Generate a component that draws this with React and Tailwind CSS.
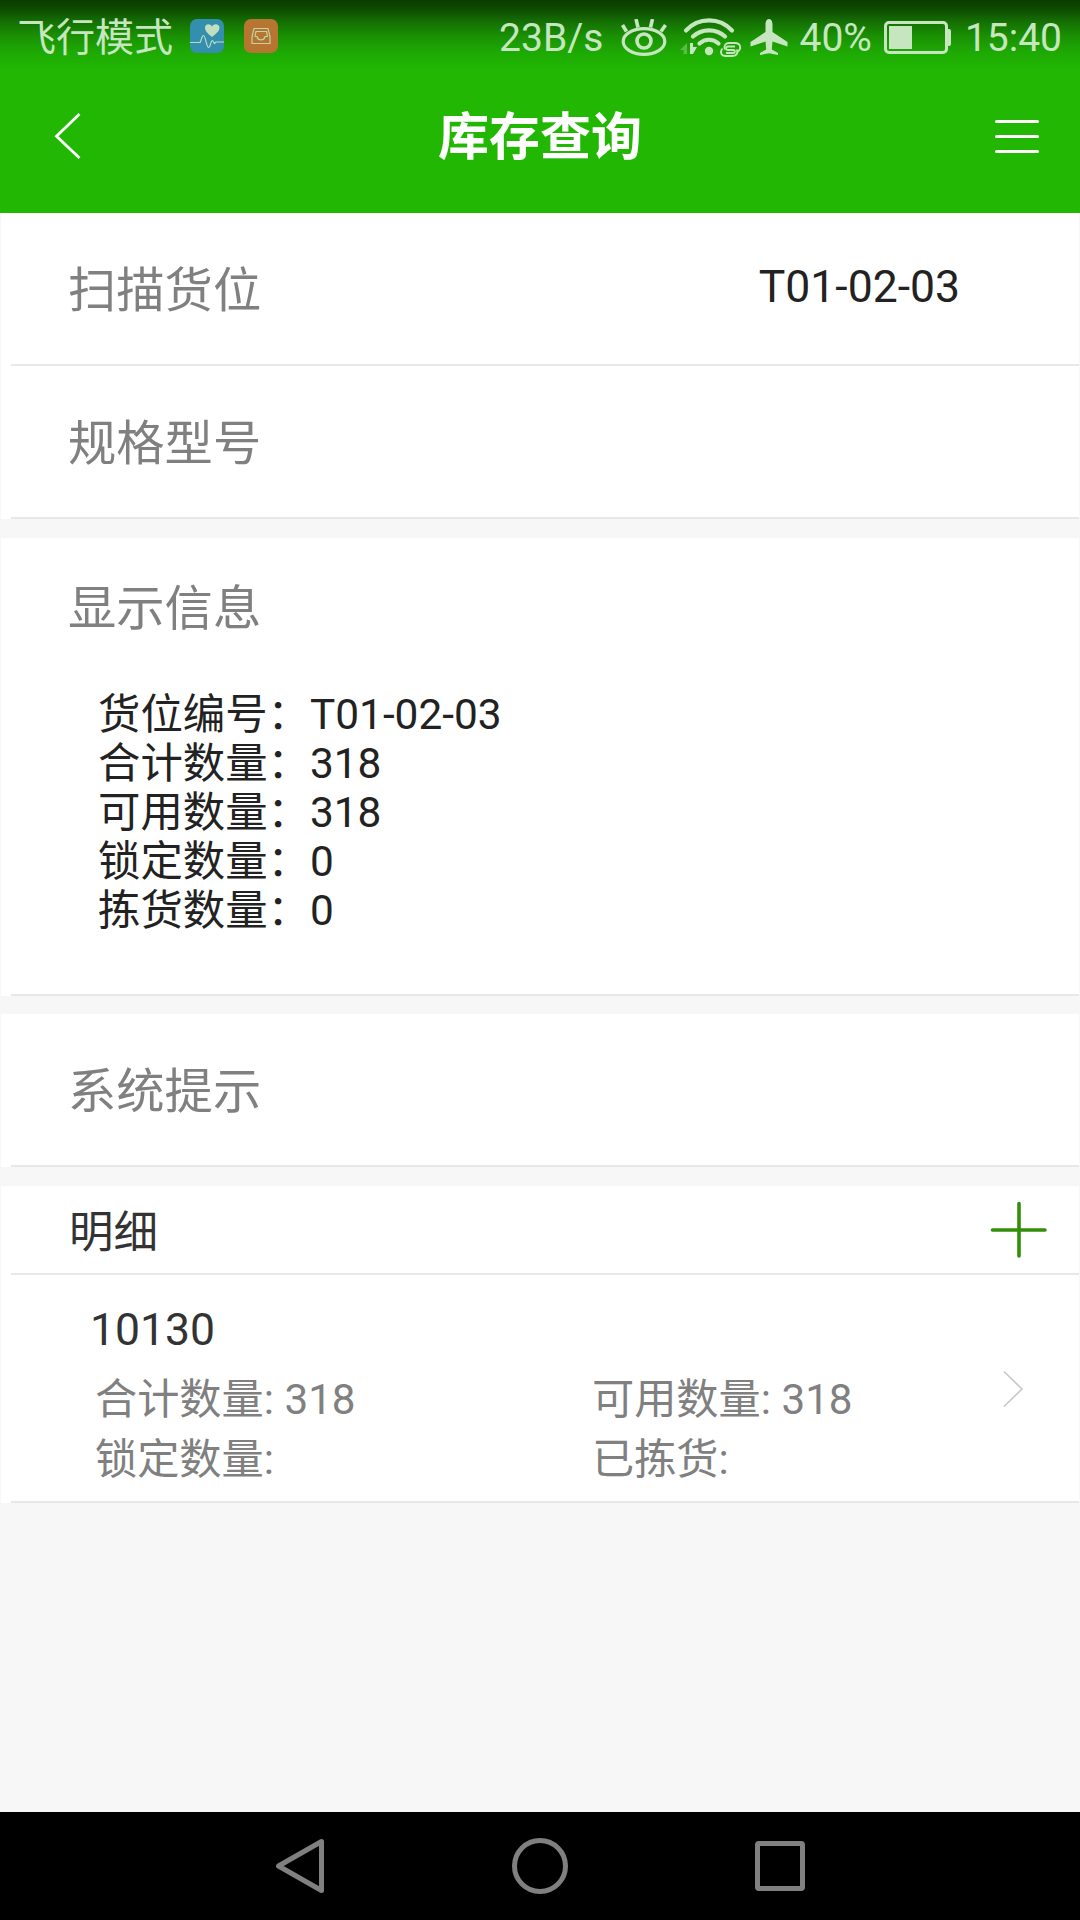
import React from 'react';

const stockInfo = [
  { label: '货位编号', value: 'T01-02-03' },
  { label: '合计数量', value: '318' },
  { label: '可用数量', value: '318' },
  { label: '锁定数量', value: '0' },
  { label: '拣货数量', value: '0' },
];

const details = [
  { model: '10130', total: '318', available: '318', locked: '', picked: '' },
];

const HealthIcon = () => (
  <svg width="34" height="34" viewBox="0 0 34 34" fill="none">
    <rect width="34" height="34" rx="7" fill="#348fae" />
    <path d="M22 18 C19 15.5 15 12.5 15 8.8 C15 4.6 20 4 22 7.4 C24 4 29.5 4.6 29.5 8.8 C29.5 12.5 25 15.5 22 18 Z" fill="#c2dec0" />
    <path d="M0 23.5 H10 C11.5 22 11.5 16.5 13.5 16.5 C15.5 16.5 16.5 28.5 18.7 28.5 C20.5 28.5 20.5 21.5 22.5 21.5 L24.5 24.5 L26 23 H34" stroke="#b9dcc0" strokeWidth="1.2" />
  </svg>
);

const InboxIcon = () => (
  <svg width="34" height="34" viewBox="0 0 34 34" fill="none" stroke="#c2d3a4" strokeWidth="1.2">
    <rect width="34" height="34" rx="7" fill="#b67632" stroke="none" />
    <path d="M10 9.5 H24 L26 17.5 V24.5 H8 V17.5 Z" />
    <path d="M11 17.5 L12 12.5 H22.5 L23.5 17.5 H21 C20 22 14 22 13 17.5 Z" />
  </svg>
);

const EyeIcon = () => (
  <svg width="46" height="38" viewBox="0 0 46 38" fill="none" stroke="#c6e6c0" strokeWidth="3.2">
    <ellipse cx="23" cy="22.5" rx="20.8" ry="12.8" />
    <circle cx="23" cy="22" r="7" strokeWidth="3.6" />
    <path d="M1.5 6 L5.5 12.5 M15 0 L17 8.5 M31.5 0 L29.5 8.5 M44.5 6 L40 12.5" strokeWidth="3.6" />
  </svg>
);

const WifiIcon = () => (
  <svg width="62" height="40" viewBox="0 0 62 40" fill="none" stroke="#c6e6c0">
    <path d="M6 12.5 C18.5 -1 39.5 -1 52 12.5" strokeWidth="4.2" strokeLinecap="round" />
    <path d="M13 18.5 C21.5 10.2 36.5 10.2 45 18.5" strokeWidth="4.2" strokeLinecap="round" />
    <path d="M19.5 25.5 C25 20.5 33 20.5 38.5 25.5" strokeWidth="4.2" strokeLinecap="round" />
    <circle cx="29" cy="33" r="4.2" fill="#c6e6c0" stroke="none" />
    <path d="M7 25 V36 H3.5 V32 H0 Z" fill="#58bd42" stroke="none" />
    <path d="M10 25 H13 V29 H17 L13 36 H10 Z" fill="#c6e6c0" stroke="none" />
    <g transform="translate(40 24)" strokeWidth="1.8">
      <path d="M15 4.5 H8 C5.5 4.5 5.5 8 8 8 H13 C15.5 8 15.5 11 13 11 H6" />
      <path d="M5 7.5 C3.5 3 6 1 9 1 H15 C21 1 21.5 7 18 9.5" />
      <path d="M2.5 6.5 C-0.5 10 1 14 6 14 H12 C17 14 18.5 10 16.5 7.5" />
    </g>
  </svg>
);

const PlaneIcon = () => (
  <svg width="38" height="36" viewBox="0 0 38 36" fill="#c6e6c0">
    <path d="M19 0 C21.5 0 22.5 3 22.5 5.5 V13 L37.5 23 V27.5 L22.5 22.5 L21.8 30.5 L28 34 V36 L19 34.3 L10 36 V34 L16.2 30.5 L15.5 22.5 L0.5 27.5 V23 L15.5 13 V5.5 C15.5 3 16.5 0 19 0 Z" />
  </svg>
);

const BatteryIcon = () => (
  <svg width="68" height="34" viewBox="0 0 68 34" fill="#c6e6c0">
    <rect x="1.5" y="1.5" width="61" height="30" rx="3.5" fill="none" stroke="#c6e6c0" strokeWidth="3" />
    <rect x="5" y="5" width="23" height="23" />
    <path d="M64 8 H65 Q67 8 67 10 V23 Q67 25 65 25 H64 Z" />
  </svg>
);

const StatusBar = () => (
  <div className="flex h-[72px] items-center bg-[linear-gradient(to_bottom,#0b3c00_0px,#0e4b00_9px,#147003_22px,#1a9003_36px,#1ea904_52px,#21b702_70px)] text-[39px] leading-none text-[#c6e6c0]">
    <span className="ml-[17px] w-[157px] pt-1 whitespace-nowrap">飞行模式</span>
    <div className="ml-4 flex gap-5">
      <HealthIcon />
      <InboxIcon />
    </div>
    <div className="ml-auto flex items-center pt-1 pr-[18px]">
      <span>23B/s</span>
      <div className="ml-[18px]"><EyeIcon /></div>
      <div className="ml-[13px]"><WifiIcon /></div>
      <div className="ml-2 pb-[3px]"><PlaneIcon /></div>
      <span className="ml-[11px]">40%</span>
      <div className="ml-3"><BatteryIcon /></div>
      <span className="ml-[13px]">15:40</span>
    </div>
  </div>
);

const Header = () => (
  <header className="h-[213px] bg-[#21b702]">
    <StatusBar />
    <div className="grid h-[128px] grid-cols-[1fr_auto_1fr] items-center">
      <svg className="ml-[54px]" width="28" height="46" viewBox="0 0 28 46" fill="none" stroke="#fff" strokeWidth="2.8">
        <path d="M25.5 1 L2.5 23.3 L25.5 45" />
      </svg>
      <h1 className="pt-[3px] text-[51px] leading-none font-bold text-white">库存查询</h1>
      <svg className="mr-10 justify-self-end" width="46" height="34" viewBox="0 0 46 34" stroke="#fff" strokeWidth="3" strokeLinecap="round">
        <path d="M2.5 2.5 H43.5 M2.5 17.5 H43.5 M2.5 32.5 H43.5" />
      </svg>
    </div>
  </header>
);

// White block with the inset divider at its bottom edge
const Panel = ({ className, children }) => (
  <section className={`mx-px flex flex-col bg-white ${className}`}>
    <div className="min-h-0 flex-1">{children}</div>
    <div className="ml-[10px] h-[2px] bg-[#e8e8e8]" />
  </section>
);

const Field = ({ label, value }) => (
  <div className="flex h-full items-center justify-between pr-[119px] pl-[67px]">
    <span className="pt-1.5 text-[48.3px] leading-none text-[#808080]">{label}</span>
    {value && <span className="-mt-0.5 text-[44.5px] leading-none text-[#222]">{value}</span>}
  </div>
);

const DetailItem = ({ item }) => (
  <div className="flex h-full items-center">
    <div className="flex-1 pt-[14px] pl-[89px]">
      <div className="text-[44.5px] leading-[60px] text-[#333]">{item.model}</div>
      <div className="mt-[10px] ml-[5px] grid grid-cols-[497px_1fr] text-[42.2px] leading-[60px] text-[#808080]">
        <span>合计数量: {item.total}</span>
        <span>可用数量: {item.available}</span>
        <span>锁定数量: {item.locked}</span>
        <span>已拣货: {item.picked}</span>
      </div>
    </div>
    <svg className="mt-0.5 mr-[55px]" width="22" height="38" viewBox="0 0 22 38" fill="none" stroke="#c7c7c7" strokeWidth="1.6">
      <path d="M2 1.5 L20 19 L2 36.5" />
    </svg>
  </div>
);

const NavBar = () => (
  <nav className="flex h-[108px] items-center bg-black">
    <svg width="1080" height="108" viewBox="0 0 1080 108" fill="none" stroke="#808080" strokeWidth="5" strokeLinejoin="round">
      <path d="M278.5 54 L321.5 29.5 V78.5 Z" />
      <circle cx="540" cy="54" r="25.5" />
      <rect x="757.5" y="31.5" width="45" height="45" rx="1.5" />
    </svg>
  </nav>
);

export default function App() {
  return (
    <div className="flex h-[1920px] w-[1080px] flex-col overflow-hidden bg-[#f7f7f7] font-['Roboto','Noto_Sans_CJK_SC',sans-serif]" lang="zh-CN">
      <Header />
      <main className="flex-1">
        <Panel className="h-[153px]">
          <Field label="扫描货位" value="T01-02-03" />
        </Panel>
        <Panel className="h-[153px]">
          <Field label="规格型号" />
        </Panel>
        <Panel className="mt-[19px] h-[458px]">
          <div className="pt-[47px] pl-[67px] text-[48.3px] leading-none text-[#808080]">显示信息</div>
          <div className="mt-[57px] pl-[97px] text-[42.4px] leading-[49px] text-[#222]">
            {stockInfo.map((row) => (
              <div key={row.label}>{row.label}：{row.value}</div>
            ))}
          </div>
        </Panel>
        <Panel className="mt-[18px] h-[153px]">
          <Field label="系统提示" />
        </Panel>
        <Panel className="mt-[19px] h-[89px]">
          <div className="flex h-full items-center justify-between pr-[31px] pl-[68px]">
            <span className="pt-[7px] text-[44.5px] leading-none text-[#333]">明细</span>
            <svg width="58" height="58" viewBox="0 0 58 58" stroke="#338f0a" strokeWidth="3.6" strokeLinecap="round">
              <path d="M2.5 29 H55 M29 2.5 V55" />
            </svg>
          </div>
        </Panel>
        {details.map((item) => (
          <Panel key={item.model} className="h-[228px]">
            <DetailItem item={item} />
          </Panel>
        ))}
      </main>
      <NavBar />
    </div>
  );
}
